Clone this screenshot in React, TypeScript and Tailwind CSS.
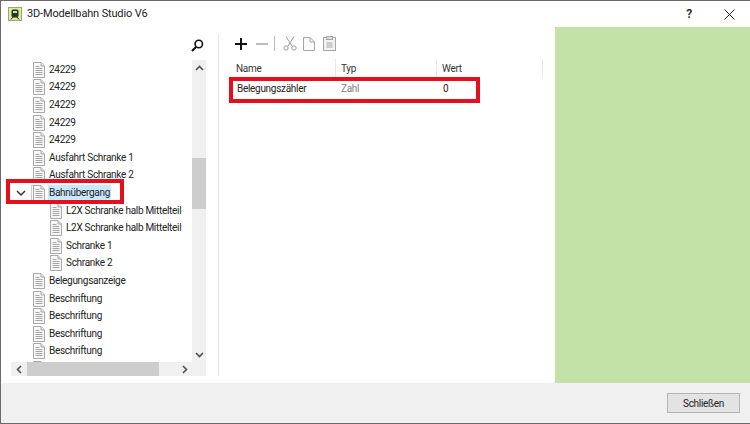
import React from 'react';

const topLevel = ['24229', '24229', '24229', '24229', '24229', 'Ausfahrt Schranke 1', 'Ausfahrt Schranke 2'];
const children = ['L2X Schranke halb Mittelteil', 'L2X Schranke halb Mittelteil', 'Schranke 1', 'Schranke 2'];
const after = ['Belegungsanzeige', 'Beschriftung', 'Beschriftung', 'Beschriftung', 'Beschriftung'];

function DocIcon({ className = '' }: { className?: string }) {
  return (
    <svg width="12" height="16" viewBox="0 0 12 16" className={`shrink-0 ${className}`} fill="none">
      <path d="M.5.5h7.500l3.500 3.500v11.500H.5V.5z" fill="#f7f7f7" stroke="#a8a8a8" />
      <path d="M8 .5V4h3.500" stroke="#a8a8a8" fill="#e4e4e4" />
      <path d="M2.500 4.500h4M2.500 6.500h7M2.500 8.500h7M2.500 10.500h7M2.500 12.500h7" stroke="#a5a5a5" />
    </svg>
  );
}

function TreeRow({ label, indent = false, selected = false }: { label?: string; indent?: boolean; selected?: boolean }) {
  return (
    <div className={`flex h-[17.6px] items-center shrink-0 ${indent ? 'pl-[49px]' : 'pl-[32px]'}`}>
      {selected ? (
        <div className="relative w-[12px] h-[16px] shrink-0">
          <DocIcon className="absolute -left-[2px] top-0 opacity-60" />
          <DocIcon className="absolute left-0 top-0" />
        </div>
      ) : (
        <DocIcon />
      )}
      {label && (
        <span className={`ml-[3px] px-[1px] leading-[16px] whitespace-nowrap ${selected ? 'bg-[#cce8ff]' : ''}`}>{label}</span>
      )}
    </div>
  );
}

function Chevron({ d }: { d: string }) {
  return (
    <svg width="9" height="9" viewBox="0 0 9 9" fill="none" stroke="#505050" strokeWidth="1.6">
      <path d={d} />
    </svg>
  );
}

export default function App() {
  return (
    <div className="relative w-[750px] h-[424px] flex flex-col overflow-hidden bg-white border-l border-t border-b border-[#6a6a6a] font-['Roboto',sans-serif] text-[10px] tracking-[-0.3px] text-[#222]">
      {/* title bar */}
      <div className="h-[26px] shrink-0 flex items-center pl-[7px]">
        <div className="w-[14px] h-[14px] border border-[#9aa86c] bg-[#dfe8a8] flex items-center justify-center">
          <svg width="10" height="11" viewBox="0 0 10 11">
            <rect x="1.500" y="0.500" width="7" height="7.500" rx="1.500" fill="#1f3a2a" />
            <rect x="3" y="2" width="4" height="2" fill="#cfe0a0" />
            <path d="M1 10.500L3 8h4l2 2.500" stroke="#1f3a2a" fill="none" />
          </svg>
        </div>
        <span className="ml-[5px] text-[11px] tracking-[-0.15px] text-[#222]">3D-Modellbahn Studio V6</span>
        <span className="ml-auto mr-[32px] text-[12px] font-bold text-[#333]">?</span>
        <svg width="11" height="11" viewBox="0 0 11 11" className="mr-[15px]" stroke="#222" fill="none">
          <path d="M.5.5l10 10M10.500.5l-10 10" />
        </svg>
      </div>

      <div className="flex-1 flex min-h-0">
        {/* tree side */}
        <div className="w-[218px] shrink-0 flex border-r border-[#e6e6e6] mt-[7px] mb-[7px] pr-[12px]">
          <div className="flex-1 flex flex-col pl-[10px] min-w-0">
            <div className="h-[26px] shrink-0 flex justify-end items-start pt-[5px] pr-[2px]">
              <svg width="13" height="13" viewBox="0 0 13 13" fill="none" stroke="#111">
                <circle cx="7.800" cy="5" r="3.700" strokeWidth="1.600" />
                <path d="M5 8L1 12" strokeWidth="2.200" />
              </svg>
            </div>
            <div className="flex-1 min-h-0 flex">
              <div className="flex-1 min-w-0 overflow-hidden pt-[1px] -ml-[10px]">
                {topLevel.map((t, i) => (
                  <TreeRow key={i} label={t} />
                ))}
                <div className="relative">
                  <svg width="10" height="7" viewBox="0 0 10 7" fill="none" stroke="#333" strokeWidth="1.500" className="absolute left-[15px] top-[6px]">
                    <path d="M1 1l4 4 4-4" />
                  </svg>
                  <TreeRow label="Bahnübergang" selected />
                </div>
                {children.map((t, i) => (
                  <TreeRow key={i} label={t} indent />
                ))}
                {after.map((t, i) => (
                  <TreeRow key={i} label={t} />
                ))}
                <TreeRow />
              </div>
              <div className="w-[14px] shrink-0 flex flex-col items-center bg-[#f0f0f0]">
                <div className="h-[16px] flex items-center justify-center">
                  <Chevron d="M1 6l3.500-3.500L8 6" />
                </div>
                <div className="w-full mt-[82px] h-[51px] bg-[#cdcdcd]" />
                <div className="mt-auto h-[16px] flex items-center justify-center">
                  <Chevron d="M1 3l3.500 3.500L8 3" />
                </div>
              </div>
            </div>
            <div className="h-[14px] shrink-0 flex items-center bg-[#f0f0f0]">
              <div className="w-[16px] flex justify-center">
                <Chevron d="M6 1L2.500 4.500 6 8" />
              </div>
              <div className="w-[132px] h-full bg-[#cdcdcd]" />
              <div className="ml-[17px] w-[16px] flex justify-center">
                <Chevron d="M3 1l3.500 3.500L3 8" />
              </div>
            </div>
          </div>
        </div>

        {/* variables */}
        <div className="flex-1 min-w-0 pl-[10px] pt-[4px]">
          <div className="h-[25px] flex items-center pl-[6px]">
            <svg width="12" height="12" viewBox="0 0 12 12" stroke="#111" strokeWidth="2">
              <path d="M6 0v12M0 6h12" />
            </svg>
            <svg width="12" height="12" viewBox="0 0 12 12" stroke="#bdbdbd" strokeWidth="2" className="ml-[9px]">
              <path d="M0 6h12" />
            </svg>
            <div className="w-px h-[15px] bg-[#bdbdbd] ml-[6px]" />
            <svg width="14" height="15" viewBox="0 0 14 15" fill="none" stroke="#9d9d9d" className="ml-[8px]">
              <path d="M3 .5l6 9.500M11 .5L5 10" />
              <circle cx="3" cy="12" r="2.200" />
              <circle cx="11" cy="12" r="2.200" />
            </svg>
            <svg width="12" height="14" viewBox="0 0 12 14" fill="#fafafa" stroke="#a5a5a5" className="ml-[6px]">
              <path d="M.5.5h6.500l4.500 4.500v8.500H.5z" />
              <path d="M7 .5V5h4.500" fill="none" />
            </svg>
            <svg width="13" height="15" viewBox="0 0 13 15" fill="#f2f2f2" stroke="#a5a5a5" className="ml-[8px]">
              <rect x=".5" y="1.500" width="12" height="13" />
              <rect x="3.500" y=".5" width="6" height="3" fill="#ddd" />
              <path d="M3.500 7h6M3.500 9h6M3.500 11h6" />
            </svg>
          </div>
          <div className="h-[19px] flex items-center text-[#333] mt-[3px]">
            <div className="w-[107px] h-full flex items-center pl-[7px] border-r border-[#e8e8e8]">Name</div>
            <div className="w-[101px] h-full flex items-center pl-[5px] border-r border-[#e8e8e8]">Typ</div>
            <div className="w-[106px] h-full flex items-center pl-[5px] border-r border-[#e8e8e8]">Wert</div>
          </div>
          <div className="h-[19px] flex items-center mt-[1px]">
            <div className="w-[107px] pl-[8px] whitespace-nowrap">Belegungszähler</div>
            <div className="w-[101px] pl-[5px] text-[#808080]">Zahl</div>
            <div className="pl-[6px]">0</div>
          </div>
        </div>

        {/* preview */}
        <div className="w-[195px] shrink-0 bg-[#c3e2a8]" />
      </div>

      {/* footer */}
      <div className="h-[40px] shrink-0 bg-[#f0f0f0] flex items-center justify-end pr-[10px]">
        <button className="w-[73px] h-[20px] bg-[#e3e3e3] border border-[#b4b4b4] text-[10px] text-[#222]">Schließen</button>
      </div>

      {/* annotations */}
      <div className="absolute left-[5px] top-[178px] w-[118px] h-[25px] border-[4px] border-[#e4101f]" />
      <div className="absolute left-[228px] top-[76px] w-[251px] h-[26px] border-[4px] border-[#e4101f]" />
    </div>
  );
}
